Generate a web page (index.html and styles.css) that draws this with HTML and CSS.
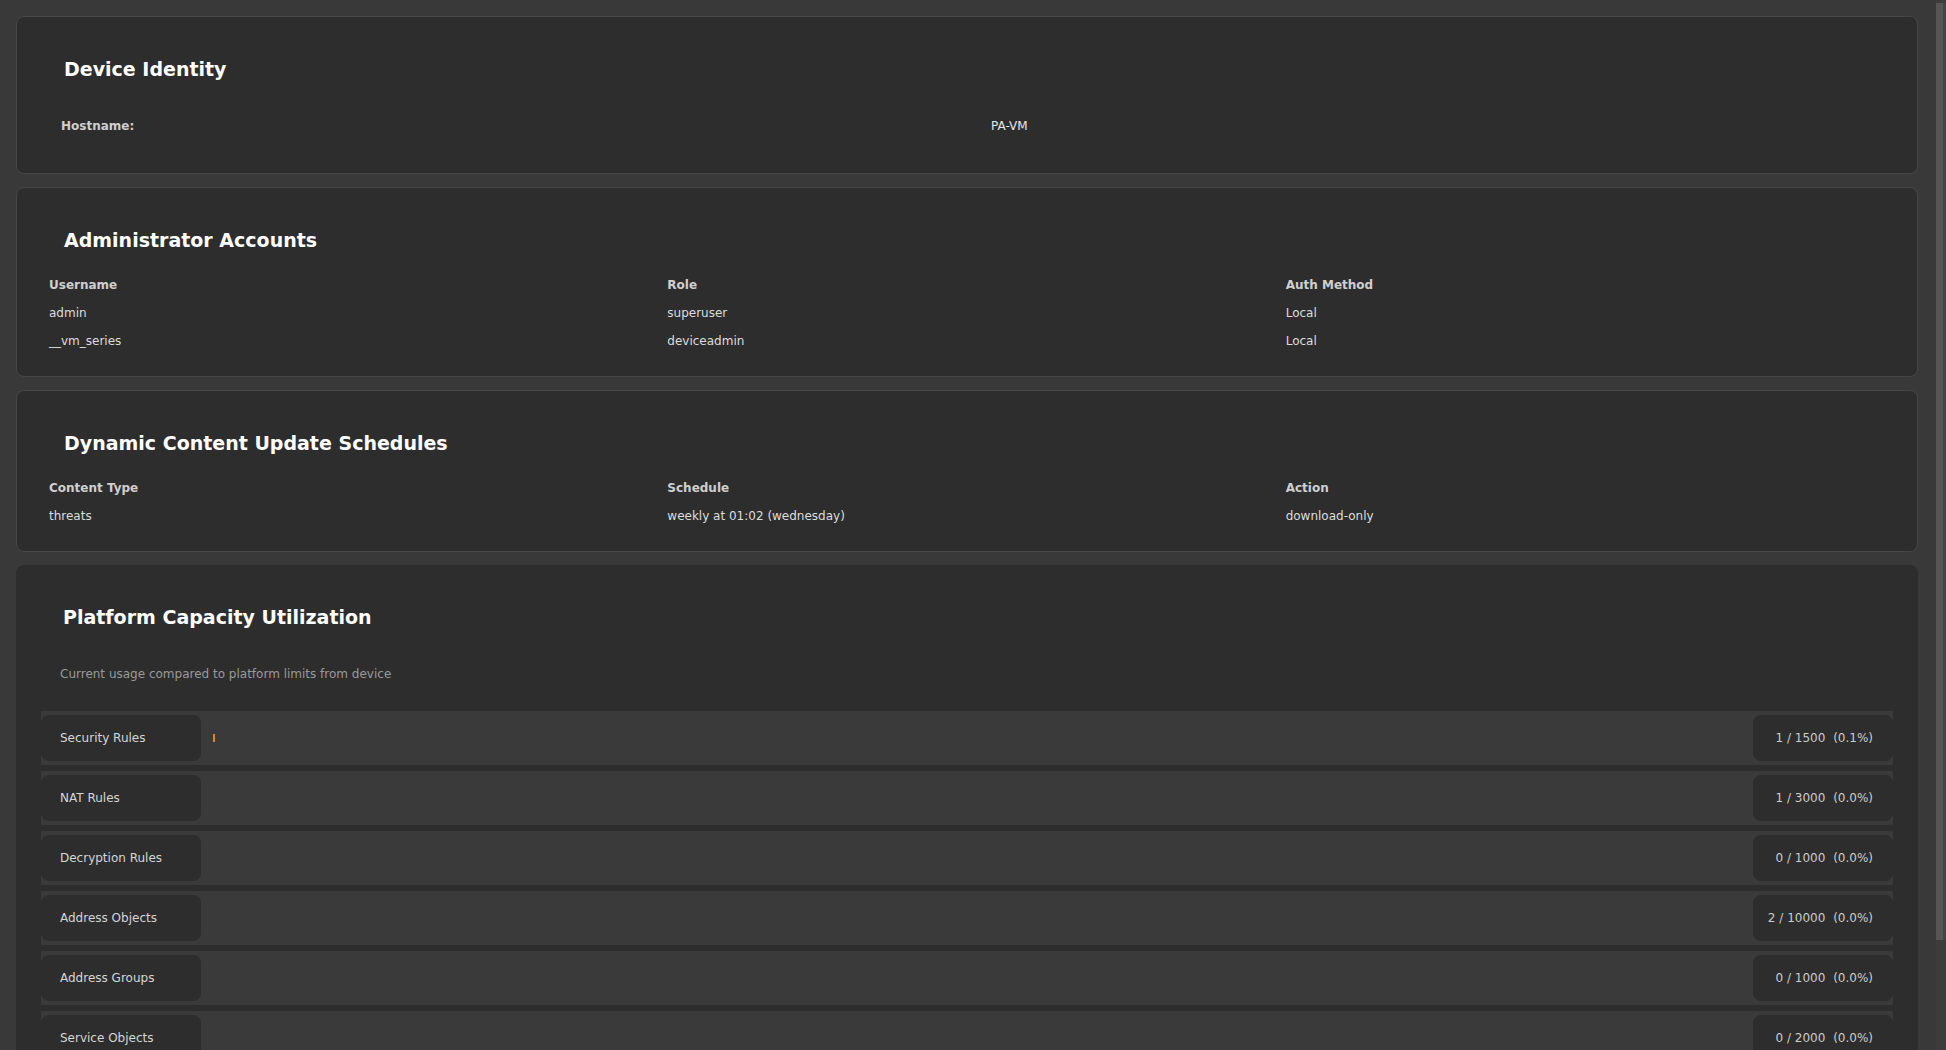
FILE: index.html
```html
<!DOCTYPE html>
<html lang="en">
<head>
    <meta charset="UTF-8">
    <title>Device Report</title>
    <link rel="stylesheet" href="styles.css">
</head>
<body>
<div class="page">

    <div class="card">
        <h2>Device Identity</h2>
        <div class="info-grid">
            <div class="info-label">Hostname:</div>
            <div class="info-value">PA-VM</div>
        </div>
    </div>

    <div class="card">
        <h2>Administrator Accounts</h2>
        <table class="data-table">
            <tr><th>Username</th><th>Role</th><th>Auth Method</th></tr>
            <tr><td>admin</td><td>superuser</td><td>Local</td></tr>
            <tr><td>__vm_series</td><td>deviceadmin</td><td>Local</td></tr>
        </table>
    </div>

    <div class="card">
        <h2>Dynamic Content Update Schedules</h2>
        <table class="data-table">
            <tr><th>Content Type</th><th>Schedule</th><th>Action</th></tr>
            <tr><td>threats</td><td>weekly at 01:02 (wednesday)</td><td>download-only</td></tr>
        </table>
    </div>

    <div class="card capacity">
        <h2>Platform Capacity Utilization</h2>
        <p class="subtitle">Current usage compared to platform limits from device</p>

        <div class="cap-row">
            <div class="cap-label">Security Rules</div>
            <div class="cap-bar"><div class="cap-fill" style="width:0.1%"></div></div>
            <div class="cap-value">1 / 1500 <span>(0.1%)</span></div>
        </div>
        <div class="cap-row">
            <div class="cap-label">NAT Rules</div>
            <div class="cap-bar"><div class="cap-fill" style="width:0%"></div></div>
            <div class="cap-value">1 / 3000 <span>(0.0%)</span></div>
        </div>
        <div class="cap-row">
            <div class="cap-label">Decryption Rules</div>
            <div class="cap-bar"><div class="cap-fill" style="width:0%"></div></div>
            <div class="cap-value">0 / 1000 <span>(0.0%)</span></div>
        </div>
        <div class="cap-row">
            <div class="cap-label">Address Objects</div>
            <div class="cap-bar"><div class="cap-fill" style="width:0%"></div></div>
            <div class="cap-value">2 / 10000 <span>(0.0%)</span></div>
        </div>
        <div class="cap-row">
            <div class="cap-label">Address Groups</div>
            <div class="cap-bar"><div class="cap-fill" style="width:0%"></div></div>
            <div class="cap-value">0 / 1000 <span>(0.0%)</span></div>
        </div>
        <div class="cap-row">
            <div class="cap-label">Service Objects</div>
            <div class="cap-bar"><div class="cap-fill" style="width:0%"></div></div>
            <div class="cap-value">0 / 2000 <span>(0.0%)</span></div>
        </div>
        <div class="cap-row">
            <div class="cap-label">Service Groups</div>
            <div class="cap-bar"><div class="cap-fill" style="width:0%"></div></div>
            <div class="cap-value">0 / 1000 <span>(0.0%)</span></div>
        </div>
    </div>

</div>
<div class="scrollbar" aria-hidden="true"><div class="scroll-thumb"></div></div>
</body>
</html>
```

FILE: styles.css
```css
*{
    margin: 0;
    padding: 0;
    box-sizing: border-box;
}
html{
    background: #393939;
}
body{
    background: #393939;
    font-family: "DejaVu Sans", sans-serif;
    font-size: 12px;
    color: #dddddd;
}
.page{
    padding: 16px 28px 16px 16px;
}

/* fake page scrollbar */
.scrollbar{
    position: fixed;
    top: 0;
    right: 0;
    width: 10px;
    height: 100%;
    background: #3c3c3c;
}
.scroll-thumb{
    margin-top: 3px;
    height: 937px;
    width: 10px;
    background: #565656;
    border-right: 3px solid #454545;
}

/* cards */
.card{
    background: #2d2d2d;
    border: 1px solid #464646;
    border-radius: 8px;
    padding: 20px 20px 21px;
    margin-bottom: 13px;
}
.card h2{
    font-size: 19px;
    line-height: 23px;
    font-weight: bold;
    color: #ffffff;
    margin: 21px 0 19px 27px;
}

/* device identity */
.info-grid{
    display: grid;
    grid-template-columns: 1fr 1fr;
}
.info-label,
.info-value{
    padding: 19px 24px;
    line-height: 14px;
}
.info-label{
    font-weight: bold;
    color: #cfcfcf;
}
.info-value{
    color: #e6e6e6;
}

/* tables */
.data-table{
    width: calc(100% - 5px);
    border-collapse: collapse;
    table-layout: fixed;
}
.data-table th,
.data-table td{
    text-align: left;
    padding: 7px 12px;
    line-height: 14px;
}
.data-table th{
    font-weight: bold;
    color: #cfcfcf;
}
.data-table td{
    color: #dddddd;
}

/* capacity */
.card.capacity{
    border-color: #2d2d2d;
    padding: 24px;
}
.card.capacity h2{
    margin: 16px 0 38px 22px;
}
.subtitle{
    color: #9a9a9a;
    line-height: 14px;
    padding-left: 19px;
    margin-bottom: 30px;
}
.cap-row{
    display: flex;
    align-items: center;
    background: #3a3a3a;
    padding: 4px 0;
    margin-bottom: 6px;
}
.cap-row:last-child{
    margin-bottom: 0;
}
.cap-label,
.cap-value{
    background: #2d2d2d;
    border-radius: 8px;
    height: 46px;
    line-height: 46px;
    color: #d6d6d6;
}
.cap-label{
    width: 160px;
    padding-left: 19px;
}
.cap-value{
    width: 140px;
    padding-right: 20px;
    text-align: right;
    color: #cccccc;
}
.cap-value span{
    margin-left: 4px;
}
.cap-bar{
    flex: 1;
    height: 8px;
    margin: 0 12px;
}
.cap-fill{
    height: 8px;
    background: #d68a2e;
}
```
